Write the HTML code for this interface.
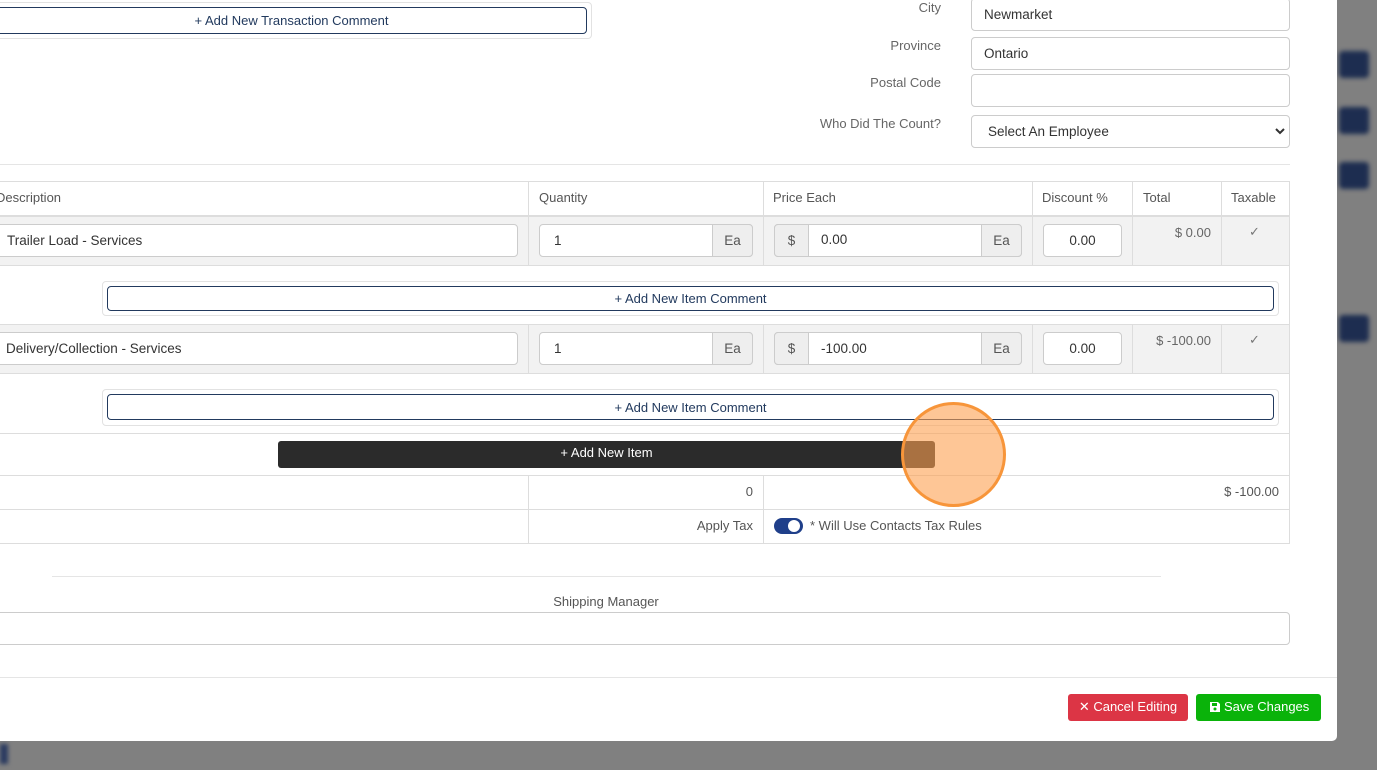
<!DOCTYPE html>
<html><head><meta charset="utf-8"><style>
*{box-sizing:border-box;margin:0;padding:0}
body{width:1377px;height:770px;overflow:hidden;background:#808080;font-family:"Liberation Sans",sans-serif;font-size:13px;color:#555;position:relative}
.a{position:absolute}
.modal{left:0;top:0;width:1337px;height:741px;background:#fff;border-bottom-right-radius:5px}
.inp{position:absolute;border:1px solid #ccc;border-radius:4px;background:#fff;color:#333;padding-left:12px;display:flex;align-items:center;font-size:13.5px}
.lbl{position:absolute;text-align:right;color:#666;font-size:13px}
.btnc{position:absolute;border:1px solid #223a5e;border-radius:4px;color:#223a5e;text-align:center;font-size:13px;display:flex;align-items:center;justify-content:center;background:#fff}
.card{position:absolute;border:1px solid #e2e2e2;border-radius:4px}
.hl{position:absolute;height:1px;background:#ddd}
.vl{position:absolute;width:1px;background:#ddd}
.addon{position:absolute;background:#eee;border:1px solid #ccc;color:#555;display:flex;align-items:center;justify-content:center;font-size:13.5px}
.blob{position:absolute;left:1339px;width:30px;height:27px;background:#1d2d50;border-radius:4px;filter:blur(2.5px)}
</style></head><body>
<div class="blob" style="top:51px"></div>
<div class="blob" style="top:107px"></div>
<div class="blob" style="top:162px"></div>
<div class="blob" style="top:315px"></div>
<div class="a" style="left:0;top:744px;width:8px;height:20px;background:#2a3a60;filter:blur(2px)"></div>
<div class="a modal"></div>

<div class="card" style="left:-5px;top:2px;width:597px;height:37px"></div>
<div class="btnc" style="left:-4px;top:7px;width:591px;height:27px">+ Add New Transaction Comment</div>

<div class="lbl" style="left:800px;top:0px;width:141px">City</div>
<div class="inp" style="left:971px;top:-2px;width:319px;height:33px">Newmarket</div>
<div class="lbl" style="left:800px;top:38px;width:141px">Province</div>
<div class="inp" style="left:971px;top:37px;width:319px;height:33px">Ontario</div>
<div class="lbl" style="left:780px;top:75px;width:161px">Postal Code</div>
<div class="inp" style="left:971px;top:74px;width:319px;height:33px"></div>
<div class="lbl" style="left:760px;top:116px;width:181px">Who Did The Count?</div>
<div class="inp" style="left:971px;top:115px;width:319px;height:33px;padding-left:16px">Select An Employee</div>
<svg class="a" style="left:1274px;top:126px" width="12" height="10"><path d="M2 3l4 4 4-4" stroke="#333" stroke-width="2" fill="none"/></svg>

<div class="hl" style="left:0;top:164px;width:1290px;background:#e5e5e5"></div>

<div class="hl" style="left:0;top:181px;width:1290px"></div>
<div class="a" style="left:0;top:215px;width:1290px;height:2px;background:#ddd"></div>
<div class="a" style="left:0;top:217px;width:1290px;height:48px;background:#f2f2f2"></div>
<div class="a" style="left:0;top:324px;width:1290px;height:49px;background:#f2f2f2"></div>
<div class="hl" style="left:0;top:265px;width:1290px"></div>
<div class="hl" style="left:0;top:324px;width:1290px"></div>
<div class="hl" style="left:0;top:373px;width:1290px"></div>
<div class="hl" style="left:0;top:433px;width:1290px"></div>
<div class="hl" style="left:0;top:475px;width:1290px"></div>
<div class="hl" style="left:0;top:509px;width:1290px"></div>
<div class="hl" style="left:0;top:543px;width:1290px"></div>
<div class="vl" style="left:1289px;top:181px;height:363px"></div>
<div class="vl" style="left:528px;top:181px;height:84px"></div>
<div class="vl" style="left:763px;top:181px;height:84px"></div>
<div class="vl" style="left:1032px;top:181px;height:84px"></div>
<div class="vl" style="left:1132px;top:181px;height:84px"></div>
<div class="vl" style="left:1221px;top:181px;height:84px"></div>
<div class="vl" style="left:528px;top:324px;height:49px"></div>
<div class="vl" style="left:763px;top:324px;height:49px"></div>
<div class="vl" style="left:1032px;top:324px;height:49px"></div>
<div class="vl" style="left:1132px;top:324px;height:49px"></div>
<div class="vl" style="left:1221px;top:324px;height:49px"></div>
<div class="vl" style="left:528px;top:475px;height:68px"></div>
<div class="vl" style="left:763px;top:475px;height:68px"></div>

<div class="a" style="left:-4px;top:190px">Description</div>
<div class="a" style="left:539px;top:190px">Quantity</div>
<div class="a" style="left:773px;top:190px">Price Each</div>
<div class="a" style="left:1042px;top:190px">Discount %</div>
<div class="a" style="left:1143px;top:190px">Total</div>
<div class="a" style="left:1231px;top:190px">Taxable</div>

<div class="inp" style="left:-5px;top:224px;width:523px;height:33px;padding-left:11px">Trailer Load - Services</div>
<div class="inp" style="left:539px;top:224px;width:214px;height:33px;padding-left:14px">1</div>
<div class="addon" style="left:712px;top:224px;width:41px;height:33px;border-radius:0 4px 4px 0">Ea</div>
<div class="inp" style="left:774px;top:224px;width:248px;height:33px"></div>
<div class="addon" style="left:774px;top:224px;width:35px;height:33px;border-radius:4px 0 0 4px">$</div>
<div class="a" style="left:821px;top:232px;color:#333;font-size:13.5px">0.00</div>
<div class="addon" style="left:981px;top:224px;width:41px;height:33px;border-radius:0 4px 4px 0">Ea</div>
<div class="inp" style="left:1043px;top:224px;width:79px;height:33px;justify-content:center;padding:0">0.00</div>
<div class="a" style="left:1133px;top:225px;width:78px;text-align:right;color:#666">$ 0.00</div>
<div class="a" style="left:1249px;top:224px;color:#777">&#10003;</div>

<div class="card" style="left:102px;top:281px;width:1177px;height:35px"></div>
<div class="btnc" style="left:107px;top:286px;width:1167px;height:25px">+ Add New Item Comment</div>

<div class="inp" style="left:-5px;top:332px;width:523px;height:33px;padding-left:10px">Delivery/Collection - Services</div>
<div class="inp" style="left:539px;top:332px;width:214px;height:33px;padding-left:14px">1</div>
<div class="addon" style="left:712px;top:332px;width:41px;height:33px;border-radius:0 4px 4px 0">Ea</div>
<div class="inp" style="left:774px;top:332px;width:248px;height:33px"></div>
<div class="addon" style="left:774px;top:332px;width:35px;height:33px;border-radius:4px 0 0 4px">$</div>
<div class="a" style="left:821px;top:341px;color:#333;font-size:13.5px">-100.00</div>
<div class="addon" style="left:981px;top:332px;width:41px;height:33px;border-radius:0 4px 4px 0">Ea</div>
<div class="inp" style="left:1043px;top:332px;width:79px;height:33px;justify-content:center;padding:0">0.00</div>
<div class="a" style="left:1133px;top:333px;width:78px;text-align:right;color:#666">$ -100.00</div>
<div class="a" style="left:1249px;top:332px;color:#777">&#10003;</div>

<div class="card" style="left:102px;top:389px;width:1177px;height:37px"></div>
<div class="btnc" style="left:107px;top:394px;width:1167px;height:26px">+ Add New Item Comment</div>

<div class="a" style="left:278px;top:441px;width:657px;height:27px;background:#2b2b2b;border-radius:3px;color:#fff;text-align:center;line-height:23px">+ Add New Item</div>
<div class="a" style="left:901px;top:402px;width:105px;height:105px;border-radius:50%;border:3px solid #f7953a;background:rgba(253,160,80,.6)"></div>

<div class="a" style="left:540px;top:484px;width:213px;text-align:right">0</div>
<div class="a" style="left:1100px;top:484px;width:179px;text-align:right">$ -100.00</div>
<div class="a" style="left:540px;top:518px;width:213px;text-align:right">Apply Tax</div>
<div class="a" style="left:774px;top:518px;width:29px;height:16px;border-radius:8px;background:#1f3f8a"></div>
<div class="a" style="left:788px;top:520px;width:12px;height:12px;border-radius:50%;background:#fff"></div>
<div class="a" style="left:810px;top:518px">* Will Use Contacts Tax Rules</div>

<div class="hl" style="left:52px;top:576px;width:1109px;background:#e5e5e5"></div>
<div class="a" style="left:506px;top:594px;width:200px;text-align:center">Shipping Manager</div>
<div class="a" style="left:-5px;top:612px;width:1295px;height:33px;border:1px solid #ccc;border-radius:4px"></div>

<div class="hl" style="left:0;top:677px;width:1337px;background:#e5e5e5"></div>
<div class="a" style="left:1068px;top:694px;width:120px;height:27px;background:#dc3545;border-radius:3px;color:#fff;text-align:center;line-height:25px;font-size:13px">✕ Cancel Editing</div>
<div class="a" style="left:1196px;top:694px;width:125px;height:27px;background:#0ab30a;border-radius:3px;color:#fff;line-height:25px;font-size:13px;padding-left:28px">Save Changes</div>
<svg class="a" style="left:1209px;top:701px" width="12" height="12" viewBox="0 0 12 12"><path d="M1 1h8l2 2v8H1z" fill="#fff"/><rect x="3" y="2" width="5" height="3" fill="#0ab30a"/><circle cx="6" cy="8" r="1.5" fill="#0ab30a"/></svg>
</body></html>
